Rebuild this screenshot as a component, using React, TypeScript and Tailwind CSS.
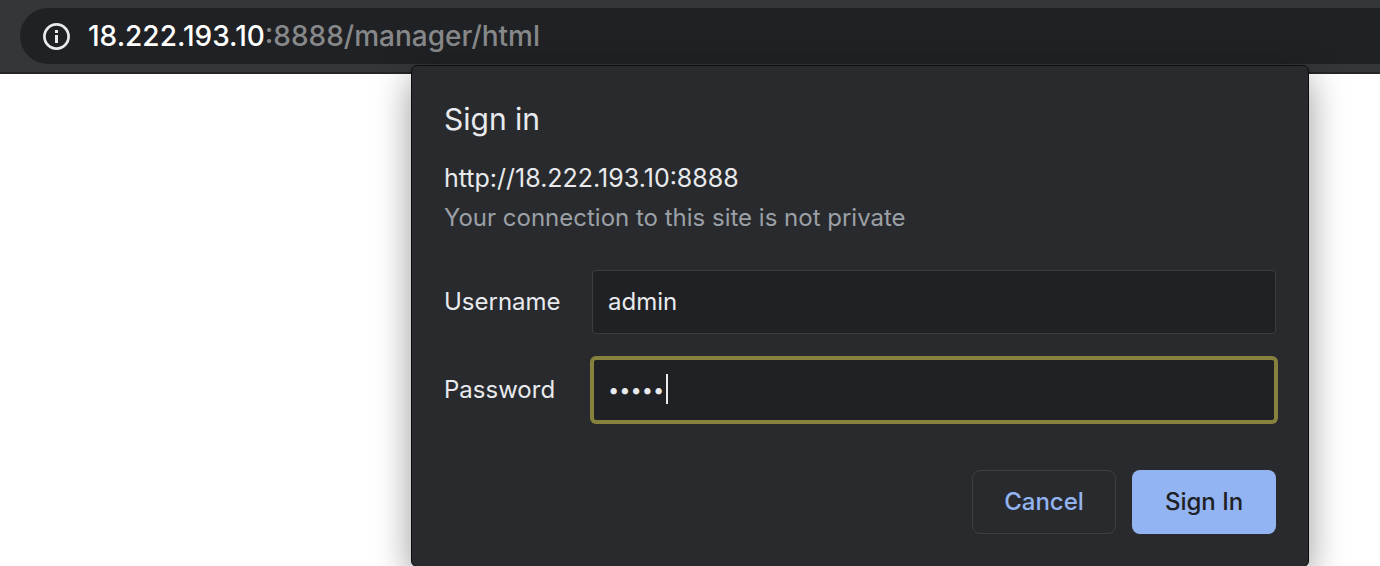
import { useState } from "react";

function InfoIcon() {
  return (
    <svg width="28" height="28" viewBox="0 0 28 28" fill="none" aria-hidden="true">
      <circle cx="14.5" cy="14.5" r="12.1" stroke="#e8eaed" strokeWidth="2.7" />
      <path d="M13 8h3v3h-3zM13 13h3v8h-3z" fill="#e8eaed" />
    </svg>
  );
}

function AddressBar() {
  return (
    <header className="border-b-2 border-[#252427] bg-[#35363a] pt-2 pb-2 pl-5">
      <div className="flex h-14 items-center gap-4 rounded-l-full bg-[#202124] pl-[22px]">
        <button type="button" aria-label="View site information">
          <InfoIcon />
        </button>
        <p className="min-w-0 flex-1 truncate pl-0.5 text-[28px] leading-10 font-medium text-[#87888a]">
          <span className="text-white">18.222.193.10</span>:8888/manager/html
        </p>
      </div>
    </header>
  );
}

function SignInDialog() {
  const [username, setUsername] = useState("admin");
  const [password, setPassword] = useState("admin");

  return (
    <form
      role="dialog"
      aria-labelledby="title"
      onSubmit={(event) => event.preventDefault()}
      className="absolute top-[65px] right-[71px] left-[411px] rounded-md border border-[#0c0c0d] bg-[#292a2d] px-8 pt-8 pb-8 text-[24px] leading-10 text-[#e8eaed] shadow-[0_12px_36px_rgba(0,0,0,0.4)]"
    >
      <h1 id="title" className="pb-0.5 text-[30px] leading-[42px]">
        Sign in
      </h1>
      <p className="mt-4 text-[25px]">http://18.222.193.10:8888</p>
      <p className="text-[#9aa0a6]">Your connection to this site is not private</p>

      <div className="mt-8 grid grid-cols-[116px_1fr] items-center gap-x-8 gap-y-6">
        <label htmlFor="username">Username</label>
        <input
          id="username"
          type="text"
          value={username}
          onChange={(event) => setUsername(event.target.value)}
          className="h-16 min-w-0 rounded-sm border border-[#3c3d41] bg-[#202124] px-[15px] pb-0.5 outline-none"
        />
        <label htmlFor="password">Password</label>
        <div className="relative flex min-w-0">
          <input
            id="password"
            type="password"
            value={password}
            onChange={(event) => setPassword(event.target.value)}
            className="h-16 min-w-0 flex-1 rounded-sm border-2 border-[#86823e] bg-[#202124] px-[14px] text-[20px] ring-2 ring-[#86823e] outline-none"
          />
          <span className="absolute top-4 left-[74px] h-[30px] w-0.5 bg-[#e8eaed]" />
        </div>
      </div>

      <div className="mt-12 flex justify-end gap-4 font-medium">
        <button type="button" className="h-16 w-36 rounded-lg border border-[#3c4043] text-[#93b4f2]">
          Cancel
        </button>
        <button type="submit" className="h-16 w-36 rounded-lg bg-[#93b4f2] text-[#202124]">
          Sign In
        </button>
      </div>
    </form>
  );
}

export default function App() {
  return (
    <main className="relative h-screen overflow-hidden bg-white font-['Inter',sans-serif]">
      <AddressBar />
      <SignInDialog />
    </main>
  );
}
